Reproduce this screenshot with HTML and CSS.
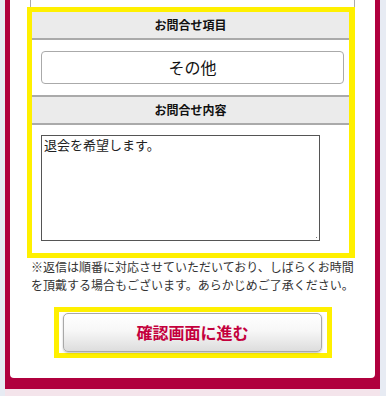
FILE: index.html
```html
<!DOCTYPE html>
<html lang="ja">
<head>
<meta charset="utf-8">
<link rel="stylesheet" href="styles.css">
</head>
<body>
<div class="frame">
  <div class="panel">
    <div class="stub"></div>
    <div class="form-box">
      <div class="head head-first">お問合せ項目</div>
      <div class="cell cell-select">
        <div class="select">その他</div>
      </div>
      <div class="head">お問合せ内容</div>
      <div class="cell cell-text">
        <div class="textarea">退会を希望します。<span class="grip"></span></div>
      </div>
    </div>
    <p class="note">※返信は順番に対応させていただいており、しばらくお時間を頂戴する場合もございます。あらかじめご了承ください。</p>
    <div class="btn-box">
      <div class="btn">確認画面に進む</div>
    </div>
  </div>
</div>
<div class="foot"></div>
</body>
</html>
```
FILE: styles.css
```css
html, body {
  margin: 0;
  padding: 0;
}
body {
  background: #e7ebf3;
  font-family: "Noto Sans CJK JP", "Noto Sans", sans-serif;
  color: #222;
  width: 386px;
  height: 396px;
  overflow: hidden;
}
.frame {
  margin-left: 5px;
  width: 365px;
  background: #b0003e;
  padding: 0 5px 11px 5px;
}
.panel {
  background: #fff;
  height: 378px;
  border-radius: 0 0 4px 4px;
  overflow: hidden;
}
.foot {
  margin-left: 5px;
  width: 375px;
  height: 7px;
  background: #f4e4eb;
}
.stub {
  margin-left: 20px;
  width: 323px;
  height: 7px;
  border-left: 1px solid #aaa;
  border-right: 1px solid #aaa;
}
.form-box {
  margin-left: 17px;
  width: 317px;
  border: 5px solid #fff000;
  border-right-width: 6px;
  height: 241px;
  display: flex;
  flex-direction: column;
}
.head {
  background: #ebebeb;
  border-top: 2px solid #aaa;
  border-bottom: 2px solid #aaa;
  font-size: 12px;
  font-weight: bold;
  text-align: center;
  height: 26px;
  line-height: 26px;
  color: #111;
}
.head-first {
  border-top: none;
}
.cell-select {
  padding: 11px 5px 11px 9px;
}
.select {
  height: 31px;
  border: 1px solid #aaa;
  border-radius: 4px;
  text-align: center;
  font-size: 16px;
  line-height: 31px;
  color: #111;
}
.cell-text {
  padding: 10px 0 0 9px;
}
.textarea {
  position: relative;
  width: 275px;
  height: 104px;
  border: 1px solid #555;
  font-size: 13px;
  line-height: 18px;
  padding: 0 0 0 2px;
  color: #222;
}
.grip {
  position: absolute;
  right: 2px;
  bottom: 2px;
  width: 1px;
  height: 1px;
  background: #777;
}
.note {
  margin: 0 0 0 21px;
  width: 330px;
  font-size: 12px;
  line-height: 18px;
  color: #333;
}
.btn-box {
  margin: 13px 0 0 44px;
  width: 268px;
  height: 41px;
  border: 5px solid #fff000;
  padding: 0;
  display: flex;
  align-items: center;
}
.btn {
  margin-left: 4px;
  width: 257px;
  height: 37px;
  border: 1px solid #a8a8a8;
  border-radius: 5px;
  background: linear-gradient(#ffffff 0%, #f7f7f7 45%, #dddddd 100%);
  box-shadow: 0 1px 2px rgba(0,0,0,0.25);
  text-align: center;
  font-size: 16px;
  font-weight: bold;
  line-height: 37px;
  color: #c4003d;
}
```
